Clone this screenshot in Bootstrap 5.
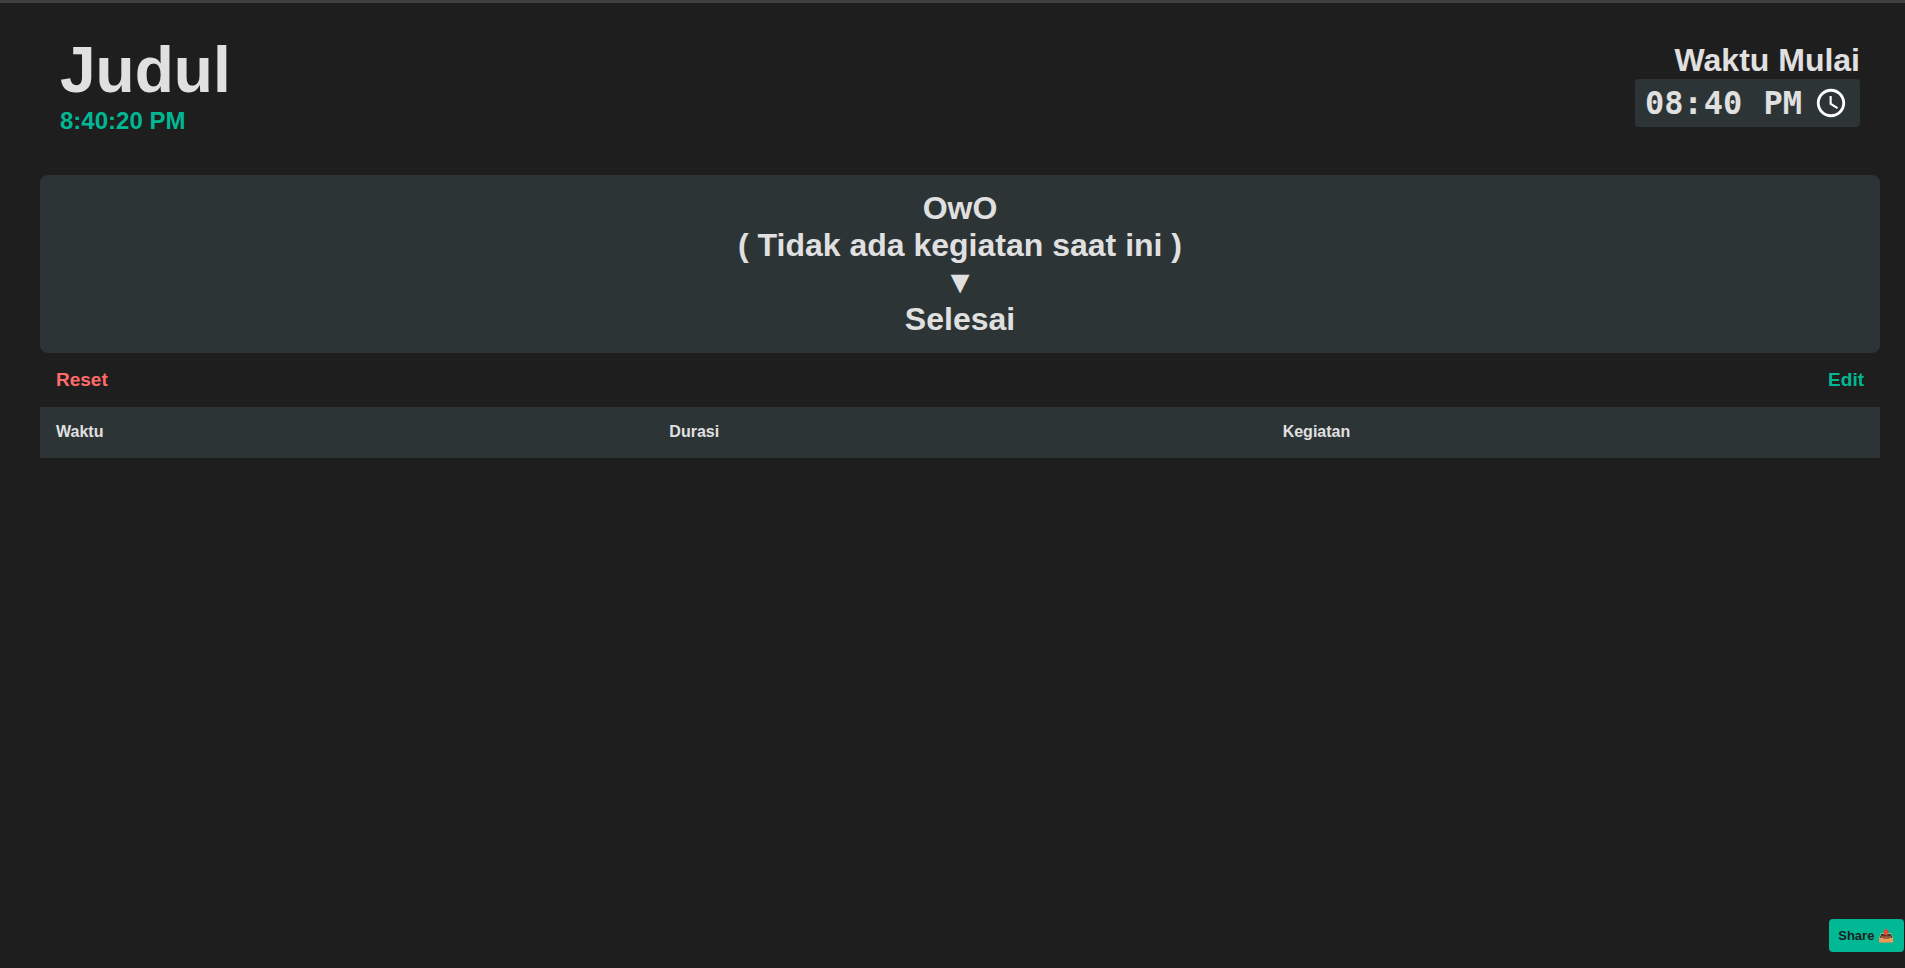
<!DOCTYPE html>
<html lang="id" data-bs-theme="dark">
<head>
<meta charset="utf-8">
<meta name="viewport" content="width=device-width, initial-scale=1">
<title>Judul</title>
<link href="https://cdn.jsdelivr.net/npm/bootstrap@5.3.0/dist/css/bootstrap.min.css" rel="stylesheet">
<style>
  body { background: #1e1e1e; color: #e0e0e0; font-family: "Liberation Sans", Arial, sans-serif; border-top: 3px solid #404040; }
  .page { padding: 31px 25px 0 40px; }
  .page-head { padding: 0 20px; margin-bottom: 40px; }
  .title { font-size: 64px; line-height: 72px; margin-bottom: 1px; color: #e0e0e0; }
  .clock { font-size: 24px; line-height: 28px; color: #00b894; }
  .head-label, .activity { font-size: 32px; line-height: 37px; }
  .time-field { font: bold 32px/38px "DejaVu Sans Mono", monospace; color: #e0e0e0; background: #2d3436; border: 0; border-radius: 4px; padding: 5px 9px 5px 10px; height: 48px; width: 225px; color-scheme: light; }
  .time-field::-webkit-calendar-picker-indicator { filter: invert(1); }
  .activity { background: #2d3436; border-radius: 8px; padding: 15px; }
  .action { font-size: 19px; line-height: 22px; padding: 16px; color: #00b894; background: none; border: 0; }
  .action-reset { color: #ff6b6b; }
  .schedule { table-layout: fixed; }
  .schedule th { background: #2d3436; color: #e0e0e0; font-size: 16px; line-height: 18px; padding: 16px 16px 17px; border: 0; }
  .share { right: 1px; bottom: 16px; background: #00b894; color: #1e1e1e; font-size: 13px; line-height: 17px; padding: 8px 10px 8px 9px; border: 0; border-radius: 4px; }
</style>
</head>
<body>
<main class="page">
  <header class="page-head d-flex justify-content-between align-items-start">
    <div>
      <h1 class="title fw-bold">Judul</h1>
      <div class="clock fw-bold">8:40:20 PM</div>
    </div>
    <div class="d-flex flex-column align-items-end pt-2">
      <label for="start" class="head-label fw-bold">Waktu Mulai</label>
      <input id="start" class="time-field" type="time" value="20:40">
    </div>
  </header>
  <section class="activity fw-bold text-center">
    <div>OwO</div>
    <div>( Tidak ada kegiatan saat ini )</div>
    <div>▼</div>
    <div>Selesai</div>
  </section>
  <div class="d-flex justify-content-between">
    <button type="button" class="action action-reset fw-bold">Reset</button>
    <button type="button" class="action fw-bold">Edit</button>
  </div>
  <table class="schedule w-100">
    <thead><tr><th scope="col">Waktu</th><th scope="col">Durasi</th><th scope="col">Kegiatan</th></tr></thead>
    <tbody></tbody>
  </table>
</main>
<button type="button" class="share position-fixed fw-bold">Share 📤</button>
<script src="https://cdn.jsdelivr.net/npm/bootstrap@5.3.0/dist/js/bootstrap.bundle.min.js"></script>
</body>
</html>
